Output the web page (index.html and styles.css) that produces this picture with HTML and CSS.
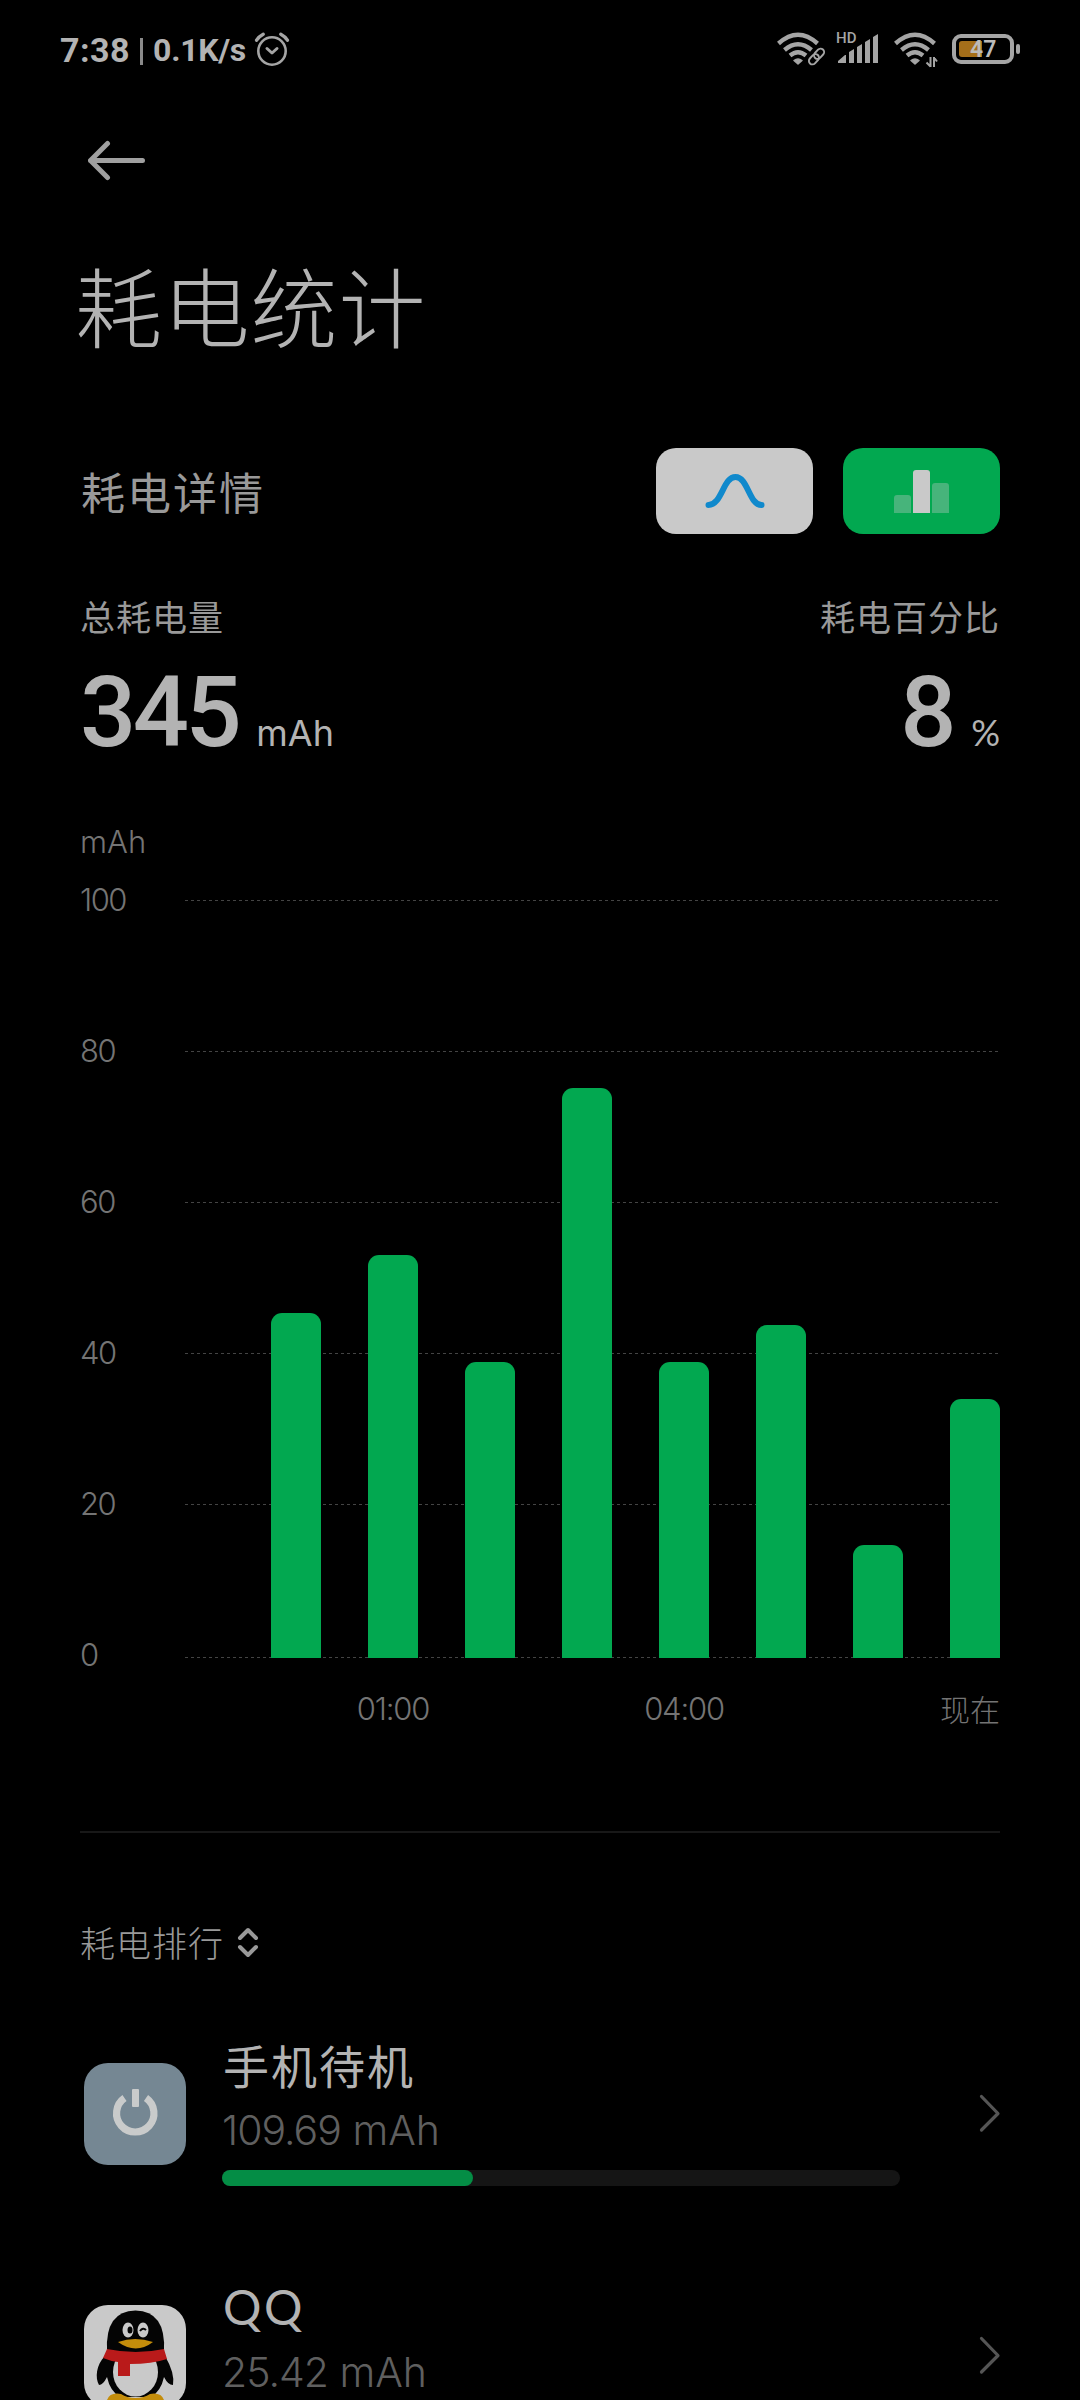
FILE: index.html
```html
<!DOCTYPE html>
<html lang="zh-CN">
<head>
    <meta charset="UTF-8">
    <meta name="viewport" content="width=device-width, initial-scale=1.0">
    <title>耗电统计</title>
    <link rel="stylesheet" href="styles.css">
</head>
<body>
    <div class="status-bar">
        <div class="status-left">
            <span class="clock">7:38</span>
            <span class="status-divider"></span>
            <span class="speed">0.1K/s</span>
            <svg class="alarm" width="36" height="36" viewBox="0 0 36 36" fill="none" stroke="#a5a5a5" stroke-width="2.6" stroke-linecap="round">
                <circle cx="18" cy="19" r="13.7"/>
                <path d="M13 16.5l5 4.5 5-4.5" stroke-width="3" stroke-linejoin="round"/>
                <path d="M2.6 8.2Q5 4.4 9.2 2.2M33.4 8.2Q31 4.4 26.8 2.2" stroke-width="3.4"/>
            </svg>
        </div>
        <div class="status-right">
            <svg width="48" height="36" viewBox="0 0 48 36" fill="none" stroke="#a5a5a5">
                <path d="M1.5 11.5Q21 -6 40.5 11.5M7.5 18Q21 6.5 34.5 18M13 23.5Q21 17 29 23.5" stroke-width="4.4"/>
                <path d="M17 28.5Q21 25.5 25 28.5L21 32Z" fill="#a5a5a5" stroke-linejoin="round" stroke-width="1.5"/>
                <g transform="translate(39.5 24.5) rotate(-47)" stroke-width="1.9">
                    <rect x="-9.5" y="-3.5" width="11.5" height="7" rx="3.5"/>
                    <rect x="-2" y="-3.5" width="11.5" height="7" rx="3.5"/>
                </g>
            </svg>
            <div class="signal">
                <span class="hd">HD</span>
                <svg width="42" height="36" viewBox="0 0 42 36" fill="#a5a5a5">
                    <path d="M1 31v-2l7-6h1v8zM12 31V20l5-3v14zM20 31V15l5-3v19zM28 31V10l5-3v24zM36 31V5l5-3v29z"/>
                </svg>
            </div>
            <svg width="46" height="36" viewBox="0 0 46 36" fill="none" stroke="#a5a5a5">
                <path d="M1.5 11.5Q21 -6 40.5 11.5M7.5 18Q21 6.5 34.5 18M13 23.5Q21 17 29 23.5" stroke-width="4.4"/>
                <path d="M17 28.5Q21 25.5 25 28.5L21 32Z" fill="#a5a5a5" stroke-linejoin="round" stroke-width="1.5"/>
                <path d="M36.5 25v10M40 25v10M36.5 34.500l-4-4M40 25.500l3 4" stroke-width="2"/>
            </svg>
            <div class="battery">
                <span class="battery-level"></span>
                <span class="battery-text">47</span>
            </div>
            <span class="battery-cap"></span>
        </div>
    </div>

    <div class="container">
        <div class="nav">
            <svg width="60" height="44" viewBox="0 0 60 44" fill="none" stroke="#a0a0a0" stroke-width="5" stroke-linecap="round" stroke-linejoin="round">
                <path d="M54.5 22.5H2.5M19.5 5.5L2.5 22.5l17 17"/>
            </svg>
        </div>
        <h1>耗电统计</h1>

        <div class="section-head">
            <h2>耗电详情</h2>
            <div class="tabs">
                <button class="tab">
                    <svg width="60" height="36" viewBox="0 0 60 36" fill="none" stroke="#1089cc" stroke-width="6" stroke-linecap="round">
                        <path d="M3.5 32C17 32 18 4 30.5 4S44 32 56.5 32"/>
                    </svg>
                </button>
                <button class="tab tab-active">
                    <svg width="56" height="44" viewBox="0 0 56 44">
                        <path d="M0 44V29q0-3 3-3h11q3 0 3 3v15zM38 44V17q0-3 3-3h11q3 0 3 3v27z" fill="#47b47b"/>
                        <path d="M19 44V4q0-3 3-3h11q3 0 3 3v40z" fill="#c9c9c9"/>
                    </svg>
                </button>
            </div>
        </div>

        <div class="stats">
            <div class="stat">
                <div class="stat-label">总耗电量</div>
                <div class="stat-value">345<span class="unit">mAh</span></div>
            </div>
            <div class="stat stat-right">
                <div class="stat-label">耗电百分比</div>
                <div class="stat-value">8<span class="unit">%</span></div>
            </div>
        </div>

        <div class="chart-unit">mAh</div>
        <div class="chart">
            <div class="ticks">
                <div class="tick"><span>100</span><i></i></div>
                <div class="tick"><span>80</span><i></i></div>
                <div class="tick"><span>60</span><i></i></div>
                <div class="tick"><span>40</span><i></i></div>
                <div class="tick"><span>20</span><i></i></div>
                <div class="tick tick-zero"><span>0</span><i></i></div>
            </div>
            <div class="bars">
                <div class="bar" style="height: 345px"></div>
                <div class="bar" style="height: 403px"></div>
                <div class="bar" style="height: 296px"></div>
                <div class="bar" style="height: 570px"></div>
                <div class="bar" style="height: 296px"></div>
                <div class="bar" style="height: 333px"></div>
                <div class="bar" style="height: 113px"></div>
                <div class="bar" style="height: 259px"></div>
            </div>
        </div>
        <div class="hours">
            <span></span><span>01:00</span><span></span><span></span>
            <span>04:00</span><span></span><span></span><span class="now">现在</span>
        </div>

        <div class="divider"></div>

        <div class="rank-head">
            <span>耗电排行</span>
            <svg width="22" height="32" viewBox="0 0 22 32" fill="none" stroke="#999" stroke-width="4" stroke-linecap="round" stroke-linejoin="round">
                <path d="M3 12l8-8 8 8M3 21l8 8 8-8"/>
            </svg>
        </div>

        <div class="app">
            <svg class="app-icon" width="102" height="102" viewBox="0 0 102 102">
                <rect width="102" height="102" fill="#758793"/>
                <path d="M40.5 35A18.7 18.7 0 1 0 62 35" fill="none" stroke="#c9cbcb" stroke-width="7.2"/>
                <rect x="48" y="26" width="7" height="18" rx="1" fill="#c9cbcb"/>
            </svg>
            <div class="app-info">
                <div class="app-name">手机待机</div>
                <div class="app-value"><span>109.69</span> mAh</div>
                <div class="progress"><div class="progress-fill" style="width: 251px"></div></div>
            </div>
            <svg class="chevron" width="22" height="40" viewBox="0 0 22 40" fill="none" stroke="#555" stroke-width="3.2" stroke-linecap="round" stroke-linejoin="round">
                <path d="M2.5 2.5L19 19.5 2.5 36"/>
            </svg>
        </div>
        <div class="app">
            <svg class="app-icon" width="102" height="102" viewBox="0 0 102 102">
                <rect width="102" height="102" fill="#c9c9c9"/>
                <path d="M21 51C12 60 11 73 15 80q4 0 8-8 3 14 13 20h31q10-6 13-20 4 8 9 8 2-12-8-29z" fill="#040404"/>
                <ellipse cx="51.5" cy="67" rx="22.5" ry="24.5" fill="#c9c9c9"/>
                <path d="M23 95q3-8 14-6 6 4 14.500 4t14.500-4q11-2 14 6v4H23z" fill="#c48d0b"/>
                <path d="M23 46Q21 6 51.5 5.5 82 6 80 46q-28 9-57 0z" fill="#040404"/>
                <ellipse cx="44" cy="25" rx="5.5" ry="7.5" fill="#c9c9c9"/>
                <ellipse cx="59" cy="25" rx="5.5" ry="7.5" fill="#c9c9c9"/>
                <ellipse cx="46" cy="25" rx="2.5" ry="3.5" fill="#040404"/>
                <path d="M56 26q3-4 6-1" fill="none" stroke="#040404" stroke-width="2"/>
                <path d="M34 37q17-6 35 0-17 13-35 0z" fill="#c48d0b"/>
                <path d="M23 44q29 6 57 0l3 10q-15 5-37 5v12H34V57q-8-1-15-4z" fill="#b91a1a"/>
            </svg>
            <div class="app-info">
                <div class="app-name latin">QQ</div>
                <div class="app-value"><span>25.42</span> mAh</div>
                <div class="progress"><div class="progress-fill" style="width: 58px"></div></div>
            </div>
            <svg class="chevron" width="22" height="40" viewBox="0 0 22 40" fill="none" stroke="#555" stroke-width="3.2" stroke-linecap="round" stroke-linejoin="round">
                <path d="M2.5 2.5L19 19.5 2.5 36"/>
            </svg>
        </div>
    </div>
</body>
</html>
```

FILE: styles.css
```css
/* General Styles */
html, body {
    height: 2400px;
    overflow: hidden;
}

body {
    width: 1080px;
    margin: 0;
    background: #000;
    color: #b3b3b3;
    font-family: 'Noto Sans CJK SC', sans-serif;
}

svg {
    display: block;
    flex-shrink: 0;
}

h1, h2 {
    margin: 0;
}

.container {
    padding: 0 80px;
}

/* Status bar */
.status-bar {
    display: flex;
    justify-content: space-between;
    align-items: center;
    height: 100px;
    padding: 0 60px;
    box-sizing: border-box;
    font-family: Roboto, sans-serif;
    font-weight: 700;
}

.status-left, .status-right {
    display: flex;
    align-items: center;
}

.clock {
    font-size: 34px;
    letter-spacing: 0.5px;
}

.status-divider {
    width: 3px;
    height: 27px;
    margin: 3px 10px 0 10px;
    background: #8a8a8a;
}

.speed {
    font-size: 32px;
    letter-spacing: -0.3px;
}

.alarm {
    margin-left: 8px;
}

.signal {
    position: relative;
    margin: 0 15px 0 12px;
}

.hd {
    position: absolute;
    left: -1px;
    top: 0;
    font-size: 15px;
    line-height: 13px;
    font-weight: 500;
    color: #a5a5a5;
}

.battery {
    display: flex;
    align-items: center;
    position: relative;
    width: 62px;
    height: 30px;
    margin: -2px 0 0 12px;
    padding-left: 3px;
    border: 4px solid #a5a5a5;
    border-radius: 9px;
    box-sizing: border-box;
}

.battery-level {
    width: 23px;
    height: 16px;
    border-radius: 3px 0 0 3px;
    background: #a56f1a;
}

.battery-text {
    position: absolute;
    left: 14px;
    top: 0;
    font-size: 23px;
    line-height: 23px;
    font-weight: 600;
    color: #bbb;
}

.battery-cap {
    width: 4px;
    height: 10px;
    margin: -2px 0 0 2px;
    border-radius: 2px;
    background: #a5a5a5;
}

/* Header */
.nav {
    display: flex;
    align-items: center;
    height: 120px;
    padding-left: 8px;
}

h1 {
    margin: 34px 0 0 -5px;
    font-size: 87px;
    line-height: 100px;
    font-weight: 200;
    letter-spacing: 0.8px;
}

.section-head {
    display: flex;
    justify-content: space-between;
    align-items: center;
    height: 86px;
    margin-top: 94px;
}

h2 {
    padding-left: 1px;
    font-size: 44px;
    line-height: 56px;
    font-weight: 400;
    letter-spacing: 2px;
    color: #999;
}

.tabs {
    display: flex;
    gap: 30px;
}

.tab {
    display: flex;
    align-items: center;
    justify-content: center;
    width: 157px;
    height: 86px;
    padding: 0;
    border: none;
    border-radius: 20px;
    background: #c9c9c9;
}

.tab-active {
    background: #02a850;
}

/* Totals */
.stats {
    display: flex;
    justify-content: space-between;
    margin-top: 60px;
}

.stat-label {
    font-size: 35px;
    line-height: 44px;
    letter-spacing: 1px;
    color: #999;
}

.stat-right {
    text-align: right;
}

.stat-value {
    margin-top: 24px;
    font-family: Roboto, sans-serif;
    font-size: 99px;
    line-height: 100px;
    font-weight: 500;
    letter-spacing: -3.5px;
}

.unit {
    margin-left: 18px;
    font-family: Inter, sans-serif;
    font-size: 36px;
    line-height: 36px;
    font-weight: 400;
    letter-spacing: 0;
}

.stat-right .unit {
    font-family: Lato, sans-serif;
}

/* Chart */
.chart-unit, .tick, .hours {
    font-family: Inter, 'Noto Sans CJK SC', sans-serif;
    font-size: 31px;
    line-height: 40px;
    font-weight: 300;
    color: #747474;
}

.chart-unit {
    margin-top: 60px;
}

.chart {
    display: grid;
    margin-top: 38px;
}

.ticks, .bars {
    grid-area: 1 / 1;
}

.ticks {
    display: grid;
    grid-template-rows: repeat(4, 151px) 153px 1px;
}

.tick {
    display: flex;
    align-items: flex-start;
}

.tick span {
    width: 105px;
    margin-top: -20px;
    letter-spacing: -1.5px;
}

.tick-zero span {
    margin-top: -22px;
}

.tick i {
    width: 813px;
    height: 1px;
    background: repeating-linear-gradient(90deg, #444 0 3px, transparent 3px 6px);
}

.bars {
    display: flex;
    align-items: flex-end;
    justify-content: flex-end;
    gap: 47px;
}

.bar {
    width: 50px;
    border-radius: 11px 11px 0 0;
    background: #02a850;
}

.hours {
    display: flex;
    justify-content: flex-end;
    gap: 47px;
    height: 40px;
    margin-top: 31px;
    letter-spacing: -1.2px;
}

.hours span {
    display: flex;
    justify-content: center;
    width: 50px;
    white-space: nowrap;
}

.hours .now {
    justify-content: flex-end;
    margin-top: -1px;
    font-family: 'Noto Sans CJK SC', sans-serif;
    font-size: 30px;
    letter-spacing: 0;
}

.divider {
    height: 2px;
    margin-top: 102px;
    background: #181818;
}

/* Ranking list */
.rank-head {
    display: flex;
    align-items: center;
    gap: 13px;
    margin: 87px 0 29px;
    font-size: 35px;
    line-height: 44px;
    font-weight: 300;
    letter-spacing: 1px;
    color: #999;
}

.app {
    display: flex;
    align-items: center;
    height: 242px;
}

.app-icon {
    margin-left: 4px;
    border-radius: 24px;
}

.app-info {
    align-self: flex-start;
    flex-shrink: 0;
    width: 678px;
    margin: 43px 79px 0 36px;
}

.app-name {
    padding-left: 1px;
    font-size: 46px;
    line-height: 56px;
    letter-spacing: 2px;
}

.app-name.latin {
    padding-top: 1px;
    margin-bottom: -1px;
    font-family: Lato, sans-serif;
    font-size: 48px;
    letter-spacing: 2.5px;
}

.app-value {
    margin-top: 14px;
    font-family: Inter, sans-serif;
    font-size: 41px;
    line-height: 48px;
    font-weight: 300;
    color: #5f5f5f;
}

.app-value span {
    letter-spacing: -1px;
}

.progress {
    height: 16px;
    margin-top: 16px;
    border-radius: 8px;
    background: #151515;
}

.progress-fill {
    height: 16px;
    border-radius: 8px;
    background: #048d45;
}
```
